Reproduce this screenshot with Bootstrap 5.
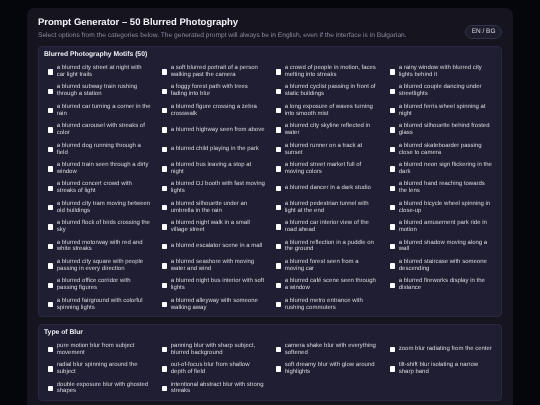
<!DOCTYPE html>
<html lang="en"><head><meta charset="utf-8"><title>Prompt Generator</title>
<link href="https://cdn.jsdelivr.net/npm/bootstrap@5.3.0/dist/css/bootstrap.min.css" rel="stylesheet">
<style>
html,body{height:100%;overflow:hidden}
body{background:#05050c;font-family:"Liberation Sans",Arial,sans-serif;color:#d4d4dd;text-rendering:geometricPrecision}
.shell{margin:8px 27px 0;padding:8.5px 11px 12px;background:#15141f;border-radius:7px;min-height:500px;will-change:transform}
.shell h1{font-size:9.5px;line-height:12px;font-weight:700;color:#f2f2f6;margin:0 0 3px}
.intro{font-size:6.65px;line-height:8px;color:#8b8b9e;margin:0;white-space:nowrap}
.langpill{font-size:6.5px;line-height:8px;padding:2px 5.5px;margin-top:8.5px;border-radius:8px;border:1px solid #32324a;background:#1d1d2d;color:#d4d4dd;white-space:nowrap}
.group{background:#1f1e32;border:1px solid #29283f;border-radius:4px;padding:4px 1px 1.8px 5px;margin-top:6.4px}
.group h2{font-size:6.75px;line-height:8px;font-weight:700;color:#eeeef4;margin:0 0 3.4px}
.opt{height:19.4px;padding:0 6.7px 0 3.7px;gap:3.7px}
.opt .form-check-input{width:5.4px;height:5.4px;margin:0;flex:none;border:0;border-radius:.7px;background-color:#fff}
.opt span{font-size:6px;line-height:6.9px;color:#d6d6df}
</style></head><body>
<main class="shell">
<header class="d-flex justify-content-between align-items-start">
<div><h1>Prompt Generator – 50 Blurred Photography</h1>
<p class="intro">Select options from the categories below. The generated prompt will always be in English, even if the interface is in Bulgarian.</p></div>
<div class="langpill">EN / BG</div>
</header>
<section class="group">
<h2>Blurred Photography Motifs (50)</h2>
<div class="row g-0">
<label class="col-3 d-flex align-items-center opt"><input class="form-check-input" type="checkbox"><span>a blurred city street at night with car light trails</span></label>
<label class="col-3 d-flex align-items-center opt"><input class="form-check-input" type="checkbox"><span>a soft blurred portrait of a person walking past the camera</span></label>
<label class="col-3 d-flex align-items-center opt"><input class="form-check-input" type="checkbox"><span>a crowd of people in motion, faces melting into streaks</span></label>
<label class="col-3 d-flex align-items-center opt"><input class="form-check-input" type="checkbox"><span>a rainy window with blurred city lights behind it</span></label>
<label class="col-3 d-flex align-items-center opt"><input class="form-check-input" type="checkbox"><span>a blurred subway train rushing through a station</span></label>
<label class="col-3 d-flex align-items-center opt"><input class="form-check-input" type="checkbox"><span>a foggy forest path with trees fading into blur</span></label>
<label class="col-3 d-flex align-items-center opt"><input class="form-check-input" type="checkbox"><span>a blurred cyclist passing in front of static buildings</span></label>
<label class="col-3 d-flex align-items-center opt"><input class="form-check-input" type="checkbox"><span>a blurred couple dancing under streetlights</span></label>
<label class="col-3 d-flex align-items-center opt"><input class="form-check-input" type="checkbox"><span>a blurred car turning a corner in the rain</span></label>
<label class="col-3 d-flex align-items-center opt"><input class="form-check-input" type="checkbox"><span>a blurred figure crossing a zebra crosswalk</span></label>
<label class="col-3 d-flex align-items-center opt"><input class="form-check-input" type="checkbox"><span>a long exposure of waves turning into smooth mist</span></label>
<label class="col-3 d-flex align-items-center opt"><input class="form-check-input" type="checkbox"><span>a blurred ferris wheel spinning at night</span></label>
<label class="col-3 d-flex align-items-center opt"><input class="form-check-input" type="checkbox"><span>a blurred carousel with streaks of color</span></label>
<label class="col-3 d-flex align-items-center opt"><input class="form-check-input" type="checkbox"><span>a blurred highway seen from above</span></label>
<label class="col-3 d-flex align-items-center opt"><input class="form-check-input" type="checkbox"><span>a blurred city skyline reflected in water</span></label>
<label class="col-3 d-flex align-items-center opt"><input class="form-check-input" type="checkbox"><span>a blurred silhouette behind frosted glass</span></label>
<label class="col-3 d-flex align-items-center opt"><input class="form-check-input" type="checkbox"><span>a blurred dog running through a field</span></label>
<label class="col-3 d-flex align-items-center opt"><input class="form-check-input" type="checkbox"><span>a blurred child playing in the park</span></label>
<label class="col-3 d-flex align-items-center opt"><input class="form-check-input" type="checkbox"><span>a blurred runner on a track at sunset</span></label>
<label class="col-3 d-flex align-items-center opt"><input class="form-check-input" type="checkbox"><span>a blurred skateboarder passing close to camera</span></label>
<label class="col-3 d-flex align-items-center opt"><input class="form-check-input" type="checkbox"><span>a blurred train seen through a dirty window</span></label>
<label class="col-3 d-flex align-items-center opt"><input class="form-check-input" type="checkbox"><span>a blurred bus leaving a stop at night</span></label>
<label class="col-3 d-flex align-items-center opt"><input class="form-check-input" type="checkbox"><span>a blurred street market full of moving colors</span></label>
<label class="col-3 d-flex align-items-center opt"><input class="form-check-input" type="checkbox"><span>a blurred neon sign flickering in the dark</span></label>
<label class="col-3 d-flex align-items-center opt"><input class="form-check-input" type="checkbox"><span>a blurred concert crowd with streaks of light</span></label>
<label class="col-3 d-flex align-items-center opt"><input class="form-check-input" type="checkbox"><span>a blurred DJ booth with fast moving lights</span></label>
<label class="col-3 d-flex align-items-center opt"><input class="form-check-input" type="checkbox"><span>a blurred dancer in a dark studio</span></label>
<label class="col-3 d-flex align-items-center opt"><input class="form-check-input" type="checkbox"><span>a blurred hand reaching towards the lens</span></label>
<label class="col-3 d-flex align-items-center opt"><input class="form-check-input" type="checkbox"><span>a blurred city tram moving between old buildings</span></label>
<label class="col-3 d-flex align-items-center opt"><input class="form-check-input" type="checkbox"><span>a blurred silhouette under an umbrella in the rain</span></label>
<label class="col-3 d-flex align-items-center opt"><input class="form-check-input" type="checkbox"><span>a blurred pedestrian tunnel with light at the end</span></label>
<label class="col-3 d-flex align-items-center opt"><input class="form-check-input" type="checkbox"><span>a blurred bicycle wheel spinning in close-up</span></label>
<label class="col-3 d-flex align-items-center opt"><input class="form-check-input" type="checkbox"><span>a blurred flock of birds crossing the sky</span></label>
<label class="col-3 d-flex align-items-center opt"><input class="form-check-input" type="checkbox"><span>a blurred night walk in a small village street</span></label>
<label class="col-3 d-flex align-items-center opt"><input class="form-check-input" type="checkbox"><span>a blurred car interior view of the road ahead</span></label>
<label class="col-3 d-flex align-items-center opt"><input class="form-check-input" type="checkbox"><span>a blurred amusement park ride in motion</span></label>
<label class="col-3 d-flex align-items-center opt"><input class="form-check-input" type="checkbox"><span>a blurred motorway with red and white streaks</span></label>
<label class="col-3 d-flex align-items-center opt"><input class="form-check-input" type="checkbox"><span>a blurred escalator scene in a mall</span></label>
<label class="col-3 d-flex align-items-center opt"><input class="form-check-input" type="checkbox"><span>a blurred reflection in a puddle on the ground</span></label>
<label class="col-3 d-flex align-items-center opt"><input class="form-check-input" type="checkbox"><span>a blurred shadow moving along a wall</span></label>
<label class="col-3 d-flex align-items-center opt"><input class="form-check-input" type="checkbox"><span>a blurred city square with people passing in every direction</span></label>
<label class="col-3 d-flex align-items-center opt"><input class="form-check-input" type="checkbox"><span>a blurred seashore with moving water and wind</span></label>
<label class="col-3 d-flex align-items-center opt"><input class="form-check-input" type="checkbox"><span>a blurred forest seen from a moving car</span></label>
<label class="col-3 d-flex align-items-center opt"><input class="form-check-input" type="checkbox"><span>a blurred staircase with someone descending</span></label>
<label class="col-3 d-flex align-items-center opt"><input class="form-check-input" type="checkbox"><span>a blurred office corridor with passing figures</span></label>
<label class="col-3 d-flex align-items-center opt"><input class="form-check-input" type="checkbox"><span>a blurred night bus interior with soft lights</span></label>
<label class="col-3 d-flex align-items-center opt"><input class="form-check-input" type="checkbox"><span>a blurred café scene seen through a window</span></label>
<label class="col-3 d-flex align-items-center opt"><input class="form-check-input" type="checkbox"><span>a blurred fireworks display in the distance</span></label>
<label class="col-3 d-flex align-items-center opt"><input class="form-check-input" type="checkbox"><span>a blurred fairground with colorful spinning lights</span></label>
<label class="col-3 d-flex align-items-center opt"><input class="form-check-input" type="checkbox"><span>a blurred alleyway with someone walking away</span></label>
<label class="col-3 d-flex align-items-center opt"><input class="form-check-input" type="checkbox"><span>a blurred metro entrance with rushing commuters</span></label>
</div>
</section>
<section class="group">
<h2>Type of Blur</h2>
<div class="row g-0">
<label class="col-3 d-flex align-items-center opt"><input class="form-check-input" type="checkbox"><span>pure motion blur from subject movement</span></label>
<label class="col-3 d-flex align-items-center opt"><input class="form-check-input" type="checkbox"><span>panning blur with sharp subject, blurred background</span></label>
<label class="col-3 d-flex align-items-center opt"><input class="form-check-input" type="checkbox"><span>camera shake blur with everything softened</span></label>
<label class="col-3 d-flex align-items-center opt"><input class="form-check-input" type="checkbox"><span>zoom blur radiating from the center</span></label>
<label class="col-3 d-flex align-items-center opt"><input class="form-check-input" type="checkbox"><span>radial blur spinning around the subject</span></label>
<label class="col-3 d-flex align-items-center opt"><input class="form-check-input" type="checkbox"><span>out-of-focus blur from shallow depth of field</span></label>
<label class="col-3 d-flex align-items-center opt"><input class="form-check-input" type="checkbox"><span>soft dreamy blur with glow around highlights</span></label>
<label class="col-3 d-flex align-items-center opt"><input class="form-check-input" type="checkbox"><span>tilt-shift blur isolating a narrow sharp band</span></label>
<label class="col-3 d-flex align-items-center opt"><input class="form-check-input" type="checkbox"><span>double exposure blur with ghosted shapes</span></label>
<label class="col-3 d-flex align-items-center opt"><input class="form-check-input" type="checkbox"><span>intentional abstract blur with strong streaks</span></label>
</div>
</section>
</main>
<script src="https://cdn.jsdelivr.net/npm/bootstrap@5.3.0/dist/js/bootstrap.bundle.min.js"></script>
</body></html>
